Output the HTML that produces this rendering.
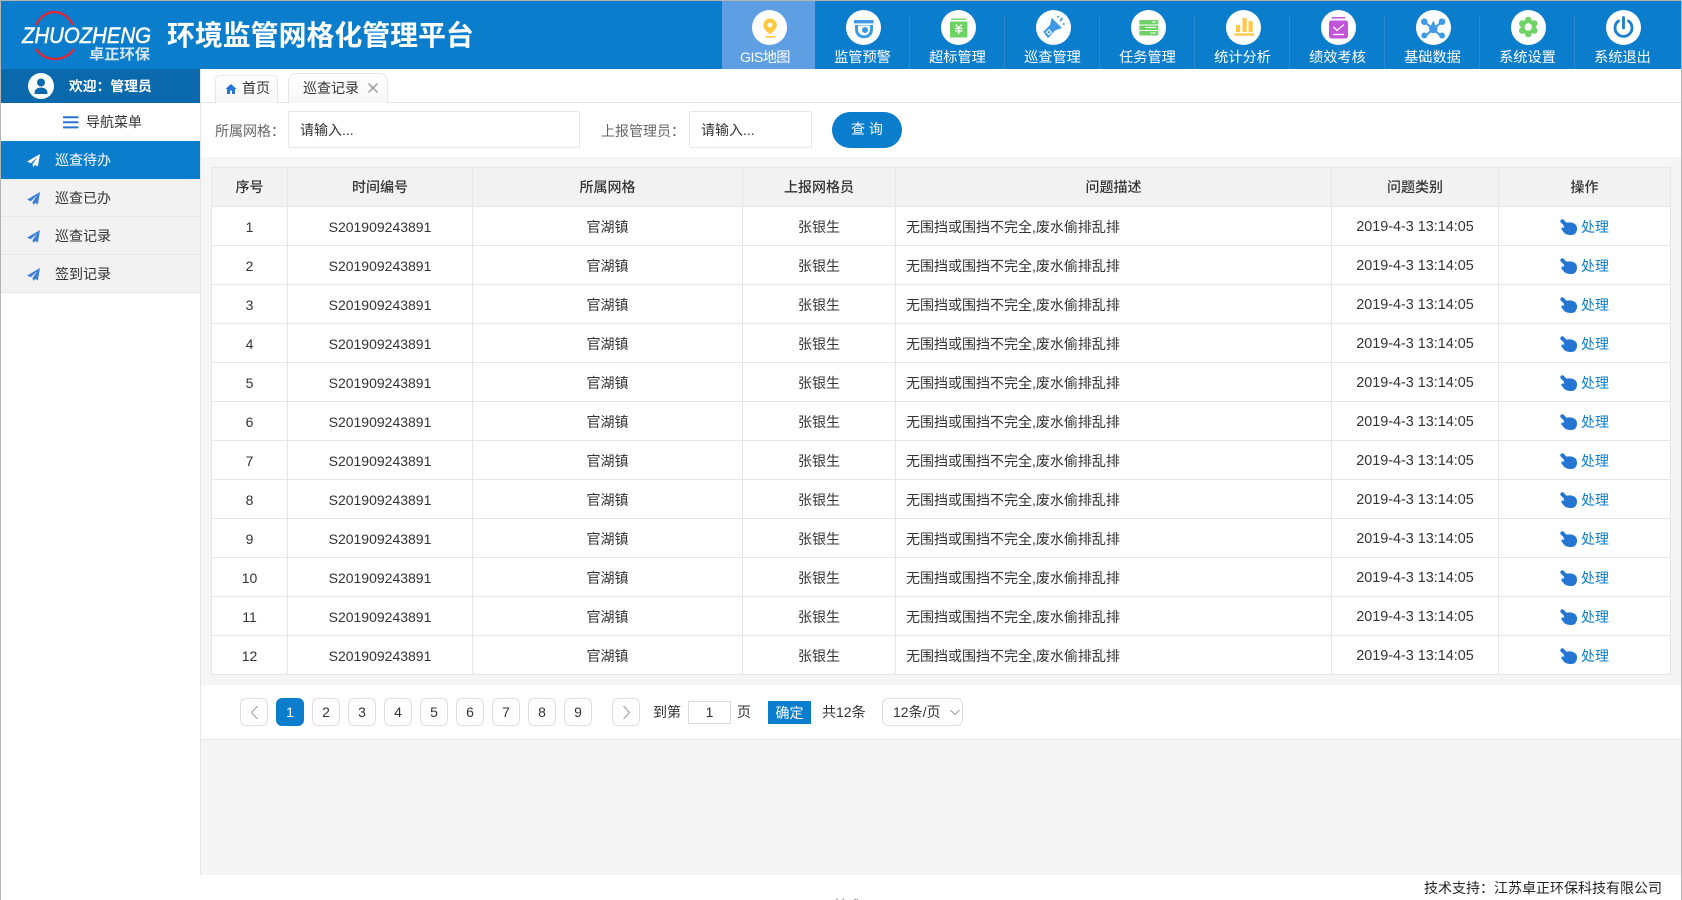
<!DOCTYPE html>
<html lang="zh-CN"><head><meta charset="utf-8"><title>环境监管网格化管理平台</title>
<style>
*{box-sizing:border-box;margin:0;padding:0}
html,body{width:1682px;height:900px;overflow:hidden;background:#fff}
body{position:relative;font:14px/20px "Liberation Sans","Noto Sans CJK SC",sans-serif;color:#333}
.a{position:absolute}
#frameL{left:0;top:0;width:1px;height:900px;background:#b5b5b5;z-index:9}
#frameT{left:0;top:0;width:1682px;height:1px;background:#b5b5b5;z-index:9}
#frameR{left:1681px;top:0;width:1px;height:900px;background:#b5b5b5;z-index:9}
#hd{left:0;top:0;width:1682px;height:69px;background:#0b7dcd}
#title{left:167px;top:13px;font-size:27.9px;line-height:42px;font-weight:700;color:#fff;white-space:nowrap;font-family:"Noto Sans CJK SC",sans-serif}
.nav{position:absolute;top:1px;width:95px;height:68px;text-align:center;color:#fff}
.nav svg{position:absolute;left:30.5px;top:9px}
.nav span{position:absolute;left:0;width:95px;top:47px;line-height:20px;font-size:14.2px;white-space:nowrap}
.nav:after{content:"";position:absolute;right:0;top:14px;bottom:0;width:1px;background:#2f88d0}
.nav.on{background:#5e9ee3;width:93px}
.nav.on svg{left:29.5px}
.nav.on span{width:86px;letter-spacing:-.55px}
.nav.on:after,.nav.end:after{display:none}
#ub{left:0;top:69px;width:200px;height:34px;background:#0a69ad;color:#fff}
#sb{left:200px;top:69px;width:1px;height:806px;background:#e6e6e6}
.si{position:absolute;left:1px;width:199px;height:38px;background:#f2f2f2;border-bottom:1px solid #e6e6e6;line-height:39px}
.si svg{position:absolute;left:26px;top:13px}
.si b{position:absolute;left:54px;top:0;font-weight:400}
.si.on{background:#0b7dcd;color:#fff;border:0}
.tab{position:absolute;background:linear-gradient(#fff,#f7f7f7);border:1px solid #e6e6e6;border-bottom:0;border-radius:5px 5px 0 0;line-height:25px}
.ip{position:absolute;top:111px;height:37px;border:1px solid #e6e6e6;border-radius:2px;background:#fff;line-height:36px;padding-left:11px;color:#333}
table{position:absolute;left:211px;top:167px;width:1460px;border-collapse:collapse;table-layout:fixed;background:#fff;font-size:14px}
th,td{border:1px solid #e6e6e6;text-align:center;height:39px;padding:0;font-weight:400;white-space:nowrap}
td{padding-top:1px}
th{background:#f2f2f2;font-weight:500;font-family:"Noto Sans CJK SC",sans-serif}
td.l{text-align:left;padding-left:10px}
td.t{font-size:14.4px;padding-top:2px}
td.o{color:#0b7dcd;font-size:14px}
td.o svg{vertical-align:-3px;margin-right:4px}
.p{position:absolute;top:698px;width:28px;height:28px;border:1px solid #dedede;border-radius:6px;text-align:center;line-height:26px;background:#fff}
.p.on{background:#0b7dcd;border-color:#0b7dcd;color:#fff}
</style></head><body>
<svg width="0" height="0" style="position:absolute">
<symbol id="h" viewBox="0 0 16 15"><path d="M.3 1.600C.8.200 2.600-.2 3.600.8L6 3.400C8 3 10.500 3 12.500 3.800 15 4.800 16 6.500 16 9 16 12.500 14 15 11 15 8 15 5 14.500 3.500 12.500L1.500 10C.8 9 1.800 7.500 3.200 8L4 8.400 3.500 6 .8 3.400C.3 2.800.1 2.200.3 1.600z" fill="#2576d2"/></symbol>
<symbol id="pb" viewBox="0 0 12 12"><path d="M12 0L0 7l3.500 1.500L9.500 3 5 9.500 6 12l1.500-2 2.500 1.500z" fill="#3a7fd5"/></symbol>
<symbol id="pw" viewBox="0 0 12 12"><path d="M12 0L0 7l3.500 1.500L9.500 3 5 9.500 6 12l1.500-2 2.500 1.500z" fill="#fff"/></symbol>
</svg>
<div class="a" id="frameL"></div><div class="a" id="frameT"></div><div class="a" id="frameR"></div>

<div class="a" id="hd"></div>
<svg class="a" style="left:18px;top:8px" width="140" height="56" viewBox="18 8 140 56">
<path d="M36 25C41 15 49 12 54 12C62 12 69 17 73 25" fill="none" stroke="#e8232d" stroke-width="2.2"/>
<path d="M36 49C41 56 48 59 55 59C63 59 70 55 74 49" fill="none" stroke="#e8232d" stroke-width="2.2"/>
<text x="22" y="43" font-family="Liberation Sans" font-style="italic" font-size="22" fill="#fff" stroke="#fff" stroke-width=".5" textLength="129" lengthAdjust="spacingAndGlyphs">ZHUOZHENG</text>
<text x="89" y="59.500" font-family="Noto Sans CJK SC" font-weight="700" font-size="14.500" fill="#d5e7f5" textLength="61" lengthAdjust="spacingAndGlyphs">卓正环保</text>
</svg>
<div class="a" id="title">环境监管网格化管理平台</div>

<div class="nav on" style="left:722px"><svg width="35" height="35" viewBox="0 0 35 35"><circle cx="17.5" cy="17.5" r="17.5" fill="#fff"/><path d="M18 8.500a6.800 6.800 0 0 0-6.800 6.800c0 3.700 4.200 6.700 6.800 9.200 2.600-2.500 6.800-5.500 6.800-9.200A6.800 6.800 0 0 0 18 8.500z" fill="#ffc83d"/><circle cx="18" cy="15" r="2.400" fill="#fff"/><rect x="13.500" y="26" width="10" height="1.600" rx=".8" fill="#ffc83d"/></svg><span>GIS地图</span></div>
<div class="nav" style="left:815px"><svg width="35" height="35" viewBox="0 0 35 35"><circle cx="17.5" cy="17.5" r="17.5" fill="#fff"/><rect x="8" y="10" width="19.500" height="3.400" fill="#3f9ae6"/><path d="M9 15h18v4c0 6-4 9.300-9 9.300S9 25 9 19z" fill="#3f9ae6"/><path d="M12 15.500h12v3.500c0 4-2.500 6.300-6 6.300S12 23 12 19z" fill="#fff"/><circle cx="19" cy="20" r="3" fill="#3f9ae6"/></svg><span>监管预警</span></div>
<div class="nav" style="left:910px"><svg width="35" height="35" viewBox="0 0 35 35"><circle cx="17.5" cy="17.5" r="17.5" fill="#fff"/><rect x="10" y="8.500" width="15" height="1.500" fill="#77d56c"/><rect x="9" y="11.500" width="17.300" height="16" fill="#6fd264"/><path d="M14.700 14.500l3 3.500 3-3.500M14 18.500h7.400M14 21h7.400M17.700 18v6" fill="none" stroke="#fff" stroke-width="1.300"/></svg><span>超标管理</span></div>
<div class="nav" style="left:1005px"><svg width="35" height="35" viewBox="0 0 35 35"><circle cx="17.5" cy="17.5" r="17.5" fill="#fff"/><path d="M15.700 7.700L26 18l-7 2.500-7 7.800-4.700-6.600L14 15z" fill="#3f9ae6"/><path d="M13 19l3.200 3.200-3.200 3.200-3.200-3.200z" fill="#fff"/><path d="M13 20.500l1.700 1.700-1.700 1.700-1.700-1.700z" fill="#3f9ae6"/><path d="M21.500 7.500l1-1.500M24 11l2.500-3M27 14.500l1.500-1" stroke="#3f9ae6" stroke-width="1.800"/></svg><span>巡查管理</span></div>
<div class="nav" style="left:1100px"><svg width="35" height="35" viewBox="0 0 35 35"><circle cx="17.5" cy="17.5" r="17.5" fill="#fff"/><rect x="8.300" y="10" width="19" height="4.500" rx=".5" fill="#6fd264"/><rect x="8.300" y="15.500" width="19" height="4.500" rx=".5" fill="#6fd264"/><rect x="8.300" y="21" width="19" height="4.500" rx=".5" fill="#6fd264"/><path d="M21 12h4M14 17.500h11M19.500 23h5.500" stroke="#fff" stroke-width="1"/></svg><span>任务管理</span></div>
<div class="nav" style="left:1195px"><svg width="35" height="35" viewBox="0 0 35 35"><circle cx="17.5" cy="17.5" r="17.5" fill="#fff"/><rect x="10" y="15" width="4.200" height="7" fill="#ffc84a"/><rect x="16.500" y="8" width="4.200" height="14" fill="#ffc84a"/><rect x="22.500" y="11" width="4.200" height="11" fill="#ffc84a"/><rect x="8.300" y="23.300" width="20" height="2.400" fill="#ffc84a"/></svg><span>统计分析</span></div>
<div class="nav" style="left:1290px"><svg width="35" height="35" viewBox="0 0 35 35"><circle cx="17.5" cy="17.5" r="17.5" fill="#fff"/><rect x="10.700" y="7" width="13.600" height="1.500" fill="#c156d8"/><rect x="8" y="10.500" width="19" height="18" rx="2.500" fill="#c156d8"/><path d="M12.500 17l3.500 3.500 7-6M12 24.500h11" fill="none" stroke="#fff" stroke-width="1.300"/></svg><span>绩效考核</span></div>
<div class="nav" style="left:1385px"><svg width="35" height="35" viewBox="0 0 35 35"><circle cx="17.5" cy="17.5" r="17.5" fill="#fff"/><path d="M8.300 11.700L26 26.700M26 11.700L8.300 26.700" stroke="#3f9ae6" stroke-width="2"/><circle cx="8.300" cy="11.700" r="3.300" fill="#3f9ae6"/><circle cx="26" cy="11.700" r="3.300" fill="#3f9ae6"/><circle cx="8.300" cy="25.500" r="3" fill="#3f9ae6"/><circle cx="26" cy="25.500" r="3" fill="#3f9ae6"/><circle cx="17.300" cy="19" r="4.200" fill="#3f9ae6"/><path d="M17.300 10.500l-2.300 5h4.600z" fill="#3f9ae6"/></svg><span>基础数据</span></div>
<div class="nav" style="left:1480px"><svg width="35" height="35" viewBox="0 0 35 35"><circle cx="17.5" cy="17.5" r="17.5" fill="#fff"/><circle cx="17.300" cy="17" r="7.500" fill="#6fd264"/><circle cx="17.300" cy="10" r="3.300" fill="#6fd264"/><circle cx="17.300" cy="24" r="3.300" fill="#6fd264"/><circle cx="11.300" cy="13.500" r="3.300" fill="#6fd264"/><circle cx="23.300" cy="13.500" r="3.300" fill="#6fd264"/><circle cx="11.300" cy="20.500" r="3.300" fill="#6fd264"/><circle cx="23.300" cy="20.500" r="3.300" fill="#6fd264"/><circle cx="17.300" cy="17" r="3.700" fill="#fff"/></svg><span>系统设置</span></div>
<div class="nav end" style="left:1575px;width:93px"><svg width="35" height="35" viewBox="0 0 35 35"><circle cx="17.5" cy="17.5" r="17.5" fill="#fff"/><path d="M12.500 11a8.500 8.500 0 1 0 10 0" fill="none" stroke="#1b7fd0" stroke-width="2.800" stroke-linecap="round"/><path d="M17.500 7.500V18" stroke="#1b7fd0" stroke-width="2.800" stroke-linecap="round"/></svg><span>系统退出</span></div>

<div class="a" id="ub">
<svg class="a" style="left:28px;top:4px" width="26" height="26" viewBox="0 0 26 26"><circle cx="13" cy="13" r="13" fill="#fff"/><circle cx="13" cy="9.500" r="4" fill="#0a69ad"/><path d="M6.500 20c0-3.500 3-5.500 6.500-5.500s6.500 2 6.500 5.500c0 .8-.5 1-1 1h-11c-.5 0-1-.2-1-1z" fill="#0a69ad"/></svg>
<div class="a" style="left:69px;top:8px;font-weight:700;white-space:nowrap;font-size:13.800px">欢迎：管理员</div>
</div>
<div class="a" id="sb"></div>
<svg class="a" style="left:63px;top:116px" width="16" height="13"><path d="M0 1.200h15.500M0 6.300h15.500M0 11.400h15.500" stroke="#2576d2" stroke-width="2"/></svg>
<div class="a" style="left:86px;top:112px;color:#333">导航菜单</div>
<div class="si on" style="top:141px"><svg width="13" height="13"><use href="#pw"/></svg><b>巡查待办</b></div>
<div class="si" style="top:179px"><svg width="13" height="13"><use href="#pb"/></svg><b>巡查已办</b></div>
<div class="si" style="top:217px"><svg width="13" height="13"><use href="#pb"/></svg><b>巡查记录</b></div>
<div class="si" style="top:255px"><svg width="13" height="13"><use href="#pb"/></svg><b>签到记录</b></div>

<div class="a" style="left:201px;top:102px;width:1480px;height:1px;background:#e6e6e6"></div>
<div class="tab" style="left:215px;top:75px;width:63px;height:28px;padding-left:26px"><svg class="a" style="left:9px;top:7px" width="12" height="12" viewBox="0 0 12 12"><path d="M6 1L.5 6H2v5h3V7.500h2V11h3V6h1.500z" fill="#2576d2"/></svg>首页</div>
<div class="tab" style="left:288px;top:73px;width:100px;height:30px;padding-left:14px;line-height:28px;border-radius:8px 8px 0 0">巡查记录<svg class="a" style="left:79px;top:9px" width="10" height="10"><path d="M.5.500l9 9M9.500.500l-9 9" stroke="#999" stroke-width="1.400"/></svg></div>

<div class="a" style="left:201px;top:157px;width:1480px;height:528px;background:#f5f5f5"></div>
<div class="a" style="left:215px;top:121px;color:#666;white-space:nowrap">所属网格：</div>
<div class="ip" style="left:288px;width:292px">请输入...</div>
<div class="a" style="left:601px;top:121px;color:#666;white-space:nowrap">上报管理员：</div>
<div class="ip" style="left:689px;width:123px">请输入...</div>
<div class="a" style="left:832px;top:112px;width:70px;height:36px;border-radius:18px;background:#0b7dcd;color:#fff;text-align:center;line-height:35px">查 询</div>

<table><colgroup><col style="width:76px"><col style="width:185px"><col style="width:270px"><col style="width:153px"><col style="width:436px"><col style="width:167px"><col></colgroup>
<tr><th>序号</th><th>时间编号</th><th>所属网格</th><th>上报网格员</th><th>问题描述</th><th>问题类别</th><th>操作</th></tr>
<tr><td>1</td><td>S201909243891</td><td>官湖镇</td><td>张银生</td><td class="l">无围挡或围挡不完全,废水偷排乱排</td><td class="t">2019-4-3 13:14:05</td><td class="o"><svg width="17" height="16"><use href="#h"/></svg>处理</td></tr>
<tr><td>2</td><td>S201909243891</td><td>官湖镇</td><td>张银生</td><td class="l">无围挡或围挡不完全,废水偷排乱排</td><td class="t">2019-4-3 13:14:05</td><td class="o"><svg width="17" height="16"><use href="#h"/></svg>处理</td></tr>
<tr><td>3</td><td>S201909243891</td><td>官湖镇</td><td>张银生</td><td class="l">无围挡或围挡不完全,废水偷排乱排</td><td class="t">2019-4-3 13:14:05</td><td class="o"><svg width="17" height="16"><use href="#h"/></svg>处理</td></tr>
<tr><td>4</td><td>S201909243891</td><td>官湖镇</td><td>张银生</td><td class="l">无围挡或围挡不完全,废水偷排乱排</td><td class="t">2019-4-3 13:14:05</td><td class="o"><svg width="17" height="16"><use href="#h"/></svg>处理</td></tr>
<tr><td>5</td><td>S201909243891</td><td>官湖镇</td><td>张银生</td><td class="l">无围挡或围挡不完全,废水偷排乱排</td><td class="t">2019-4-3 13:14:05</td><td class="o"><svg width="17" height="16"><use href="#h"/></svg>处理</td></tr>
<tr><td>6</td><td>S201909243891</td><td>官湖镇</td><td>张银生</td><td class="l">无围挡或围挡不完全,废水偷排乱排</td><td class="t">2019-4-3 13:14:05</td><td class="o"><svg width="17" height="16"><use href="#h"/></svg>处理</td></tr>
<tr><td>7</td><td>S201909243891</td><td>官湖镇</td><td>张银生</td><td class="l">无围挡或围挡不完全,废水偷排乱排</td><td class="t">2019-4-3 13:14:05</td><td class="o"><svg width="17" height="16"><use href="#h"/></svg>处理</td></tr>
<tr><td>8</td><td>S201909243891</td><td>官湖镇</td><td>张银生</td><td class="l">无围挡或围挡不完全,废水偷排乱排</td><td class="t">2019-4-3 13:14:05</td><td class="o"><svg width="17" height="16"><use href="#h"/></svg>处理</td></tr>
<tr><td>9</td><td>S201909243891</td><td>官湖镇</td><td>张银生</td><td class="l">无围挡或围挡不完全,废水偷排乱排</td><td class="t">2019-4-3 13:14:05</td><td class="o"><svg width="17" height="16"><use href="#h"/></svg>处理</td></tr>
<tr><td>10</td><td>S201909243891</td><td>官湖镇</td><td>张银生</td><td class="l">无围挡或围挡不完全,废水偷排乱排</td><td class="t">2019-4-3 13:14:05</td><td class="o"><svg width="17" height="16"><use href="#h"/></svg>处理</td></tr>
<tr><td>11</td><td>S201909243891</td><td>官湖镇</td><td>张银生</td><td class="l">无围挡或围挡不完全,废水偷排乱排</td><td class="t">2019-4-3 13:14:05</td><td class="o"><svg width="17" height="16"><use href="#h"/></svg>处理</td></tr>
<tr><td>12</td><td>S201909243891</td><td>官湖镇</td><td>张银生</td><td class="l">无围挡或围挡不完全,废水偷排乱排</td><td class="t">2019-4-3 13:14:05</td><td class="o"><svg width="17" height="16"><use href="#h"/></svg>处理</td></tr>
</table>

<div class="a" style="left:201px;top:739px;width:1480px;height:136px;background:#f5f5f5;border-top:1px solid #e9e9e9"></div>
<div class="p" style="left:240px"><svg width="9" height="15" style="margin-top:6px"><path d="M7.500 1L1.500 7.500l6 6.500" fill="none" stroke="#999"/></svg></div>
<div class="p on" style="left:276px">1</div><div class="p" style="left:312px">2</div><div class="p" style="left:348px">3</div><div class="p" style="left:384px">4</div><div class="p" style="left:420px">5</div><div class="p" style="left:456px">6</div><div class="p" style="left:492px">7</div><div class="p" style="left:528px">8</div><div class="p" style="left:564px">9</div>
<div class="p" style="left:612px"><svg width="9" height="15" style="margin-top:6px"><path d="M1.500 1l6 6.500-6 6.500" fill="none" stroke="#999"/></svg></div>
<div class="a" style="left:653px;top:702px;white-space:nowrap">到第</div>
<div class="a" style="left:688px;top:701px;width:43px;height:23px;border:1px solid #dcdcdc;text-align:center;line-height:21px">1</div>
<div class="a" style="left:737px;top:702px">页</div>
<div class="a" style="left:768px;top:701px;width:43px;height:23px;background:#0b7dcd;color:#fff;text-align:center;line-height:24px;font-size:14px">确定</div>
<div class="a" style="left:822px;top:702px;white-space:nowrap">共12条</div>
<div class="a" style="left:882px;top:698px;width:81px;height:28px;border:1px solid #dedede;border-radius:6px;line-height:26px;padding-left:10px;white-space:nowrap">12条/页<svg class="a" style="left:67px;top:10px" width="10" height="7"><path d="M.5 1l4.500 4.500L9.500 1" fill="none" stroke="#999"/></svg></div>

<div class="a" style="left:1424px;top:878px;white-space:nowrap;font-size:14px;color:#222">技术支持：江苏卓正环保科技有限公司</div>
<div class="a" style="left:834px;top:896px;white-space:nowrap;color:#555">技术</div>
</body></html>
